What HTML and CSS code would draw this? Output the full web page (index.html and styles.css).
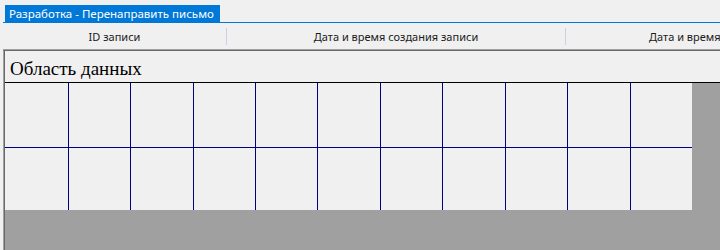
FILE: index.html
```html
<!DOCTYPE html>
<html lang="ru">
<head>
    <meta charset="UTF-8">
    <title>Разработка - Перенаправить письмо</title>
    <link rel="stylesheet" href="styles.css">
</head>
<body>
    <!-- Вкладка формы -->
    <div class="tabs">
        <div class="tab">Разработка - Перенаправить письмо</div>
    </div>

    <!-- Заголовки колонок -->
    <div class="col-header">
        <div class="col col-id">ID записи</div>
        <div class="col col-created">Дата и время создания записи</div>
        <div class="col col-changed">Дата и время изменения записи</div>
    </div>

    <!-- Область данных -->
    <div class="data-area">
        <div class="data-title">Область данных</div>
        <div class="grid">
            <div></div><div></div><div></div><div></div><div></div><div></div>
            <div></div><div></div><div></div><div></div><div></div>
            <div></div><div></div><div></div><div></div><div></div><div></div>
            <div></div><div></div><div></div><div></div><div></div>
        </div>
    </div>
</body>
</html>
```

FILE: styles.css
```css
body {
    margin: 0;
    width: 720px;
    height: 250px;
    overflow: hidden;
    background-color: #f0f0f0;
    font-family: "Noto Sans", "Liberation Sans", sans-serif;
    font-size: 11px;
    color: #1a1a1a;
}

.tabs {
    margin-left: 3px;
    padding: 5px 0 0 2px;
    border-bottom: 1px solid #0078d7;
}

.tab {
    display: inline-block;
    height: 17px;
    line-height: 17px;
    padding: 0 6px 0 4px;
    background-color: #0078d7;
    color: white;
    font-size: 11.5px;
    vertical-align: top;
}

.col-header {
    display: flex;
    height: 26px;
    margin-left: 3px;
    border-bottom: 1px solid #a0a0a0;
    white-space: nowrap;
    overflow: hidden;
}

.col {
    flex: none;
    height: 17px;
    margin-top: 5px;
    line-height: 17px;
    text-align: center;
}

/* разделители колонок */
.col-id {
    width: 223px;
    border-right: 1px solid #d4cde0;
}

.col-created {
    width: 338px;
    border-right: 1px solid #d4cde0;
}

.col-changed {
    width: 340px;
}

.data-area {
    margin-left: 3px;
    height: 200px;
    border-top: 1px solid #696969;
    border-left: 1px solid #a0a0a0;
    box-shadow: inset 1px 0 0 #696969;
    padding-left: 1px;
    background-color: #a0a0a0;
}

.data-title {
    height: 30px;
    padding: 1px 0 0 5px;
    background-color: #f0f0f0;
    border-bottom: 1px solid #000;
    font-family: "Liberation Serif", serif;
    font-size: 19px;
    line-height: 33px;
    color: #000;
}

.grid {
    display: grid;
    grid-template-columns: 63px 61px 62px 61px 61px 62px 61px 62px 61px 62px 61px;
    grid-template-rows: 64px 62px;
    gap: 1px;
    width: 687px;
    background-color: #000080;
}

.grid div {
    background-color: #f0f0f0;
}
```
